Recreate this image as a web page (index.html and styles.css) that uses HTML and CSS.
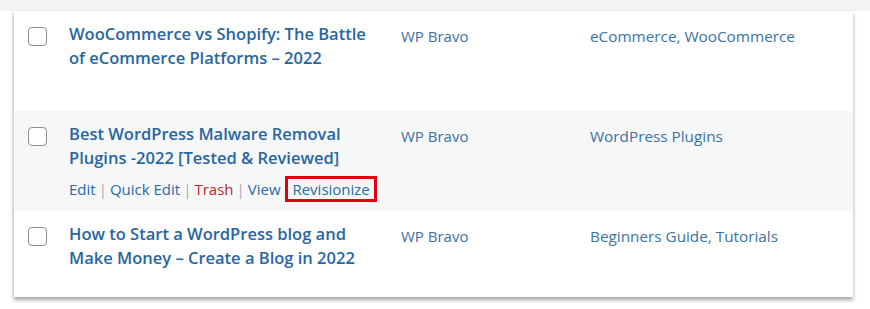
FILE: index.html
```html
<!DOCTYPE html>
<html lang="en">
<head>
  <meta charset="UTF-8">
  <title>Posts</title>
  <link rel="stylesheet" href="styles.css">
</head>
<body>
  <div class="top-band"></div>
  <div class="posts-table">
    <div class="post-row">
      <div class="check-col"><span class="checkbox"></span></div>
      <div class="title-col">
        <a class="post-title" href="#">WooCommerce vs Shopify: The Battle of eCommerce Platforms – 2022</a>
      </div>
      <div class="author-col"><a href="#">WP Bravo</a></div>
      <div class="cat-col"><a href="#">eCommerce</a>, <a href="#">WooCommerce</a></div>
    </div>

    <div class="post-row alt">
      <div class="check-col"><span class="checkbox"></span></div>
      <div class="title-col">
        <a class="post-title" href="#">Best WordPress Malware Removal Plugins -2022 [Tested &amp; Reviewed]</a>
        <div class="row-actions">
          <a href="#">Edit</a><span class="sep">|</span><a href="#">Quick Edit</a><span class="sep">|</span><a href="#" class="trash">Trash</a><span class="sep">|</span><a href="#">View</a>
          <a href="#" class="highlight">Revisionize</a>
        </div>
      </div>
      <div class="author-col"><a href="#">WP Bravo</a></div>
      <div class="cat-col"><a href="#">WordPress Plugins</a></div>
    </div>

    <div class="post-row last">
      <div class="check-col"><span class="checkbox"></span></div>
      <div class="title-col">
        <a class="post-title" href="#">How to Start a WordPress blog and Make Money – Create a Blog in 2022</a>
      </div>
      <div class="author-col"><a href="#">WP Bravo</a></div>
      <div class="cat-col"><a href="#">Beginners Guide</a>, <a href="#">Tutorials</a></div>
    </div>
  </div>
</body>
</html>
```

FILE: styles.css
```css
body {
  margin: 0;
  padding-bottom: 12px;
  background: #ffffff;
  font-family: "Open Sans", "Noto Sans", sans-serif;
}

a {
  color: #2a6aa8;
  text-decoration: none;
}

.top-band {
  height: 11px;
  background: #f4f4f4;
}

.posts-table {
  position: relative;
  margin-left: 14px;
  width: 839px;
  background: #fff;
  box-shadow: 0 3px 4px rgba(0, 0, 0, 0.35), -1px 0 2px rgba(0, 0, 0, 0.08);
}

.post-row {
  display: grid;
  grid-template-columns: 55px 332px 189px 1fr;
  height: 100px;
  box-sizing: border-box;
  padding-top: 11px;
}
.post-row.alt {
  background: #f6f7f7;
}
.post-row.last {
  height: 86px;
}

.check-col {
  padding-left: 14px;
  padding-top: 5px;
}
.checkbox {
  display: block;
  width: 17px;
  height: 17px;
  border: 1.5px solid #8c8f94;
  border-radius: 4px;
  background: #fff;
}

.post-title {
  display: block;
  font-size: 16.5px;
  font-weight: 600;
  line-height: 24px;
  color: #2866a3;
  padding-right: 20px;
}

.author-col,
.cat-col {
  font-size: 15px;
  line-height: 24px;
  padding-top: 2px;
}
.author-col a,
.cat-col a {
  color: #3b72a6;
}
.cat-col {
  color: #3b72a6;
  font-size: 15.3px;
}

.row-actions {
  margin-top: 6px;
  font-size: 15px;
  line-height: 22px;
}
.row-actions .sep {
  color: #a7aaad;
  margin: 0 3px;
}
.row-actions .trash {
  color: #b32d2e;
}
.row-actions .highlight {
  display: inline-block;
  margin-left: 1px;
  padding: 0 4px;
  line-height: 20px;
  border: 3px solid #e3000f;
}
```
